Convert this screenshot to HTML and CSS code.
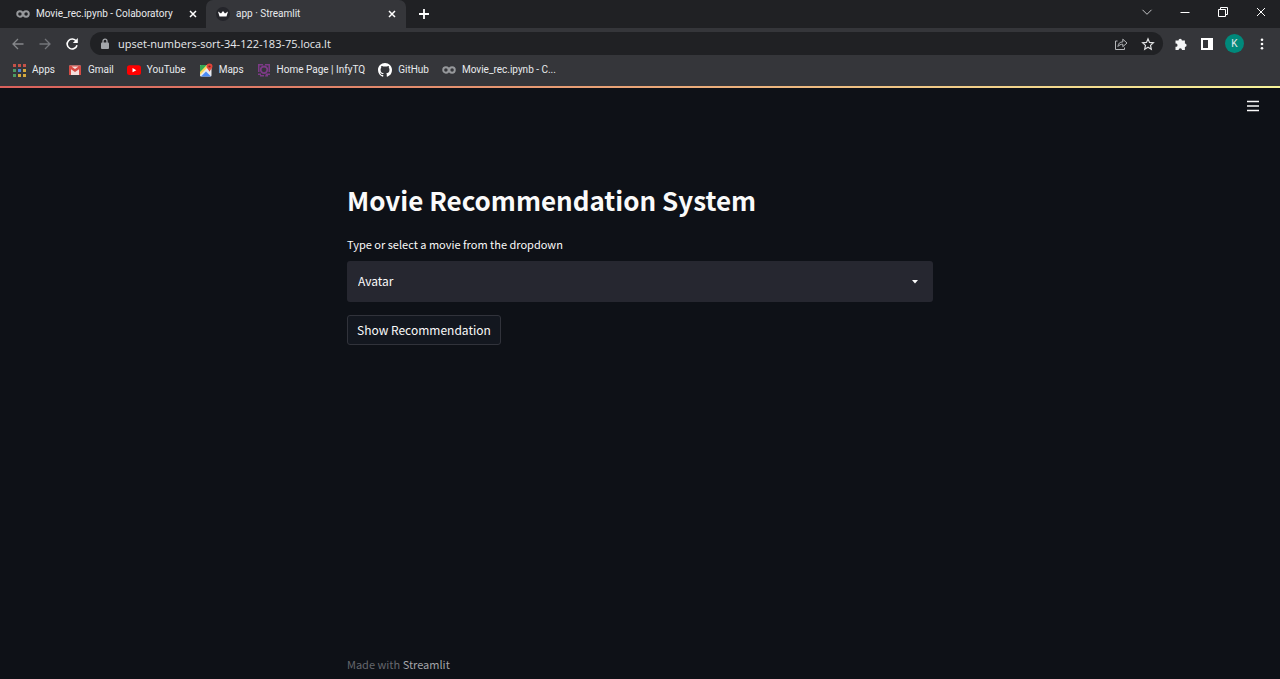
FILE: index.html
```html
<!DOCTYPE html>
<html lang="en">
<head>
<meta charset="utf-8">
<meta name="viewport" content="width=device-width, initial-scale=1">
<title>app · Streamlit</title>
<link rel="stylesheet" href="styles.css">
</head>
<body>
<svg class="defs" width="0" height="0" aria-hidden="true">
  <symbol id="colab" viewBox="0 0 14 14"><g fill="none" stroke="currentColor" stroke-width="1.900"><circle cx="3.900" cy="7" r="2.700"/><circle cx="10.100" cy="7" r="2.700"/></g></symbol>
  <symbol id="close" viewBox="0 0 8 8"><path d="M1 1l6 6M7 1L1 7" stroke="currentColor" stroke-width="1.500" fill="none"/></symbol>
</svg>
<header class="browser">
  <div class="tabstrip">
    <div class="tab">
      <button class="tab-title"><svg class="icon colab" viewBox="0 0 14 14"><use href="#colab"/></svg>Movie_rec.ipynb - Colaboratory</button>
      <button class="tab-close" aria-label="Close tab"><svg width="8" height="8"><use href="#close"/></svg></button>
    </div>
    <div class="tab active">
      <button class="tab-title"><svg class="icon" viewBox="0 0 14 14"><circle cx="7" cy="7" r="7" fill="#24252a"/><path d="M2 4.500l3 2L7 4l2 2.500 3-2L10.500 9.500h-7z" fill="#fff"/></svg>app · Streamlit</button>
      <button class="tab-close" aria-label="Close tab"><svg width="8" height="8"><use href="#close"/></svg></button>
    </div>
    <button class="new-tab" aria-label="New tab"><svg width="12" height="12" viewBox="0 0 12 12"><path d="M6 1v10M1 6h10" stroke="#fff" stroke-width="1.800"/></svg></button>
    <div class="window-controls">
      <button aria-label="Search tabs"><svg width="12" height="12" viewBox="0 0 12 12"><path d="M1.500 3.800L6 8.300l4.500-4.500" fill="none" stroke="#c4c5c7"/></svg></button>
      <button aria-label="Minimize"><svg width="12" height="12" viewBox="0 0 12 12"><path d="M1.500 6.500h9" stroke="#fff"/></svg></button>
      <button aria-label="Restore"><svg width="12" height="12" viewBox="0 0 12 12"><path d="M1.500 3.500h7v7h-7zM3.500 3.500v-2h7v7h-2" fill="none" stroke="#fff"/></svg></button>
      <button aria-label="Close window"><svg width="12" height="12" viewBox="0 0 12 12"><path d="M2 2l8 8M10 2l-8 8" stroke="#fff"/></svg></button>
    </div>
  </div>
  <div class="toolbar">
    <div class="nav">
      <button aria-label="Back"><svg width="14" height="14" viewBox="0 0 14 14"><path d="M12.500 7H2.200M7 2L2 7l5 5" fill="none" stroke="#85878a" stroke-width="1.300"/></svg></button>
      <button aria-label="Forward"><svg width="14" height="14" viewBox="0 0 14 14"><path d="M1.500 7h10.300M7 2l5 5-5 5" fill="none" stroke="#73757a" stroke-width="1.300"/></svg></button>
      <button aria-label="Reload"><svg width="14" height="14" viewBox="0 0 14 14"><path d="M11.300 4.200A5 5 0 1 0 12 8.300" fill="none" stroke="#fff" stroke-width="1.600"/><path d="M12.800 1v5H7.800z" fill="#fff"/></svg></button>
    </div>
    <div class="omnibox">
      <svg width="10" height="12" viewBox="0 0 10 12"><path d="M3 5V3.200a2 2 0 0 1 4 0V5" fill="none" stroke="#a3a6aa" stroke-width="1.300"/><rect x="1" y="4.500" width="8" height="6.500" rx="1" fill="#a3a6aa"/></svg>
      <input type="text" aria-label="Address" value="upset-numbers-sort-34-122-183-75.loca.lt">
      <button aria-label="Share"><svg width="14" height="14" viewBox="0 0 14 14"><path d="M3.500 4H1.500v8.500h9V10.500" fill="none" stroke="#b5b7ba"/><path d="M4 9.500c.2-3 1.800-4.600 4.800-4.600V2.200L13 6 8.800 9.700V7.200C6.600 7.200 5.200 8 4 9.500z" fill="none" stroke="#b5b7ba"/></svg></button>
      <button aria-label="Bookmark"><svg width="14" height="14" viewBox="0 0 14 14"><path d="M7 1.800l1.500 3.600 3.900.4-2.900 2.600.8 3.800L7 10.200l-3.300 2 .8-3.800-2.900-2.600 3.900-.4z" fill="none" stroke="#dfe0e2" stroke-width="1.200"/></svg></button>
    </div>
    <div class="actions">
      <button aria-label="Extensions"><svg width="14" height="14" viewBox="0 0 14 14"><path d="M1.500 3.500h3a1.700 1.700 0 1 1 3.400 0h3v3a1.700 1.700 0 1 1 0 3.400v3H8a1.700 1.700 0 1 0-3.400 0H1.500V9.700a1.600 1.600 0 1 0 0-3.100z" fill="#f4f5f6"/></svg></button>
      <button aria-label="Side panel"><svg width="14" height="14" viewBox="0 0 14 14"><path d="M1 1h12v12H1zM3 3v8h5V3z" fill="#fff" fill-rule="evenodd"/></svg></button>
      <button class="avatar" aria-label="Profile">K</button>
      <button aria-label="Menu"><svg width="14" height="14" viewBox="0 0 14 14" fill="#fff"><circle cx="7" cy="2.800" r="1.300"/><circle cx="7" cy="7" r="1.300"/><circle cx="7" cy="11.200" r="1.300"/></svg></button>
    </div>
  </div>
  <nav class="bookmarks" aria-label="Bookmarks">
    <a href="#"><svg class="icon" viewBox="0 0 14 14"><g fill="#c55248"><path d="M1 1h3v3H1zM6 1h3v3H6zM11 1h3v3h-3z"/></g><path d="M1 6h3v3H1zM1 11h3v3H1z" fill="#4b9b63"/><path d="M6 6h3v3H6z" fill="#4b83d6"/><path d="M11 6h3v3h-3zM6 11h3v3H6zM11 11h3v3h-3z" fill="#d4a93e"/></svg>Apps</a>
    <a href="#"><svg class="icon" viewBox="0 0 14 14"><rect x="1" y="2.500" width="12" height="9.500" rx="1" fill="#f3dedc"/><path d="M1 12V3.500q0-1 1-1h10q1 0 1 1V12h-2V6.200L7 9 3 6.200V12z" fill="#d44a43"/><path d="M3.500 3.500L7 6l3.500-2.500z" fill="#f3dedc"/></svg>Gmail</a>
    <a href="#"><svg class="icon" viewBox="0 0 14 14"><rect y="2.300" width="14" height="9.800" rx="2.500" fill="#f00"/><path d="M5.500 5v4.300L9.300 7.200z" fill="#fff"/></svg>YouTube</a>
    <a href="#"><svg class="icon" viewBox="0 0 14 14"><rect x="1" y="2" width="11.500" height="11.500" rx="1" fill="#e8eaed"/><path d="M1 3q0-1 1-1h6L1 10z" fill="#34a853"/><path d="M2 13.500l5-5 5 5z" fill="#4c8bf5"/><path d="M8 2L1 9v3L10 3z" fill="#fbd75b"/><path d="M10.500.5a3 3 0 0 1 3 3c0 2-2.200 2.700-3 5.300-.8-2.600-3-3.300-3-5.300a3 3 0 0 1 3-3z" fill="#e2453a"/><circle cx="10.500" cy="3.500" r="1.100" fill="#7c2520"/></svg>Maps</a>
    <a href="#"><svg class="icon" viewBox="0 0 14 14"><path d="M1 1h5v1.500H2.500V9H1zM8 1h5v8h-1.500V2.500H8zM1 10.500h3V12h3v1.500H3V12H1zM9 10.500h4V12h-2v1.500H8z" fill="#7d3a87"/><circle cx="7" cy="6.800" r="3.300" fill="none" stroke="#7d3a87" stroke-width="1.800"/></svg>Home Page | InfyTQ</a>
    <a href="#"><svg class="icon" viewBox="0 0 16 16"><path fill="#fff" d="M8 0C3.580 0 0 3.580 0 8c0 3.540 2.290 6.530 5.470 7.590.4.070.55-.17.55-.38 0-.19-.01-.82-.01-1.490-2.010.37-2.530-.49-2.690-.94-.09-.23-.48-.94-.82-1.130-.28-.15-.68-.52-.01-.53.63-.01 1.080.58 1.230.82.72 1.210 1.870.87 2.330.66.07-.52.28-.87.51-1.070-1.780-.2-3.640-.89-3.640-3.950 0-.87.31-1.590.82-2.150-.08-.2-.36-1.020.08-2.120 0 0 .67-.21 2.200.82a7.600 7.600 0 0 1 4 0c1.530-1.040 2.200-.82 2.200-.82.44 1.100.16 1.920.08 2.120.51.56.82 1.270.82 2.150 0 3.070-1.870 3.750-3.650 3.950.29.25.54.73.54 1.480 0 1.070-.01 1.930-.01 2.200 0 .21.15.46.55.38A8 8 0 0 0 16 8c0-4.420-3.580-8-8-8z"/></svg>GitHub</a>
    <a href="#"><svg class="icon colab" viewBox="0 0 14 14"><use href="#colab"/></svg>Movie_rec.ipynb - C...</a>
  </nav>
</header>
<div class="app">
  <div class="app-bar">
    <button aria-label="App menu"><svg width="14" height="14" viewBox="0 0 14 14"><path d="M1 2.500h12M1 7h12M1 11.500h12" stroke="#fafafa" stroke-width="1.600"/></svg></button>
  </div>
  <main>
    <h1>Movie Recommendation System</h1>
    <label for="movie">Type or select a movie from the dropdown</label>
    <div class="select">
      <select id="movie"><option>Avatar</option></select>
      <svg width="8" height="4" viewBox="0 0 8 4" aria-hidden="true"><path d="M1 0h6L4 3.500z" fill="#fafafa"/></svg>
    </div>
    <button class="show">Show Recommendation</button>
  </main>
  <footer>Made with <a href="#">Streamlit</a></footer>
</div>
</body>
</html>
```
FILE: styles.css
```css
* { box-sizing: border-box; }
body {
  margin: 0;
  min-height: 100vh;
  display: flex;
  flex-direction: column;
  background: #0e1117;
  color: #fafafa;
  font-family: "Noto Sans CJK SC", "Noto Sans", sans-serif;
}
button {
  margin: 0;
  padding: 0;
  border: 0;
  background: none;
  color: inherit;
  font: inherit;
}
svg { display: block; flex: none; }
a { color: inherit; text-decoration: none; }
.defs { position: absolute; }
.icon { width: 14px; height: 14px; }
.colab { color: #97999c; }

.browser {
  background: #35363a;
  color: #e8eaed;
  font: 10px/14px Roboto, "Noto Sans", sans-serif;
}
.tabstrip {
  display: flex;
  height: 28px;
  background: #202124;
}
.tab {
  display: flex;
  align-items: center;
  width: 200px;
  padding: 0 10px;
}
.tab:first-child { width: 206px; padding: 0 9px 0 16px; }
.active { background: #35363a; border-radius: 7px 7px 0 0; }
.tab-title {
  display: flex;
  flex: 1;
  align-items: center;
  gap: 6px;
  white-space: nowrap;
}
.tab-close { color: #fff; }
.new-tab { padding: 0 12px; }
.window-controls {
  display: flex;
  gap: 26px;
  margin-left: auto;
  padding: 0 13px 4px 0;
}
.toolbar {
  display: flex;
  align-items: center;
  height: 31px;
}
.nav { display: flex; gap: 13px; padding: 0 11px; }
.omnibox {
  display: flex;
  flex: 1;
  align-items: center;
  height: 23px;
  padding: 0 8px 0 10px;
  border-radius: 12px;
  background: #202124;
}
.omnibox input {
  flex: 1;
  min-width: 0;
  padding: 0 8px;
  border: 0;
  outline: 0;
  background: none;
  color: #e8eaed;
  font: 11px/16px "Open Sans", "Noto Sans", sans-serif;
}
.omnibox button + button { margin-left: 13px; }
.actions {
  display: flex;
  align-items: center;
  gap: 12px;
  padding: 0 11px;
}
.avatar {
  width: 19px;
  height: 19px;
  margin: 0 -1px;
  border-radius: 50%;
  background: #00897b;
}
.bookmarks {
  display: flex;
  align-items: center;
  gap: 13px;
  height: 27px;
  padding: 0 12px 5px;
  white-space: nowrap;
}
.bookmarks a { display: flex; align-items: center; gap: 6px; }

.app {
  display: flex;
  flex: 1;
  flex-direction: column;
  border-top: 2px solid;
  border-image: linear-gradient(90deg, #d9605b, #e9a577 50%, #f8f499) 1;
}
.app-bar {
  display: flex;
  justify-content: flex-end;
  padding: 11px 20px 0;
}
main, footer {
  width: 100%;
  max-width: 586px;
  margin: 0 auto;
}
main { flex: 1; padding-top: 67px; }
h1 {
  margin: 0 0 15px;
  font-size: 26px;
  line-height: 40px;
  font-weight: 700;
}
label {
  display: block;
  margin-bottom: 8px;
  font-size: 11px;
  line-height: 18px;
}
.select { display: grid; align-items: center; }
.select > * { grid-area: 1 / 1; }
.select svg { justify-self: end; margin-right: 14px; }
select {
  width: 100%;
  height: 41px;
  padding: 0 11px 2px;
  border: 0;
  border-radius: 3px;
  appearance: none;
  background: #262730;
  color: #fafafa;
  font: inherit;
  font-size: 12px;
}
.show {
  height: 30px;
  margin-top: 13px;
  padding: 0 9px 2px;
  border: 1px solid #31333b;
  border-radius: 3px;
  background: #13171f;
  font-size: 12px;
}
footer {
  padding: 0 0 6px;
  color: #65676d;
  font-size: 11px;
  line-height: 18px;
}
footer a { color: #a3a4a8; }
```
